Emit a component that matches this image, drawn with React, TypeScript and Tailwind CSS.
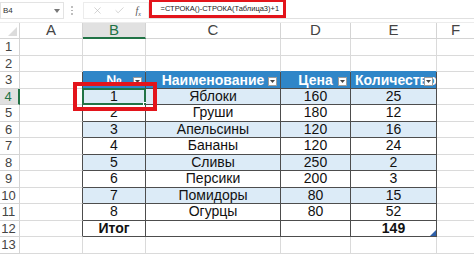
import { Check, X } from "lucide-react";

type Row = [string, string, string, string];

const rows: Row[] = [
    ["1", "Яблоки", "160", "25"],
    ["2", "Груши", "180", "12"],
    ["3", "Апельсины", "120", "16"],
    ["4", "Бананы", "120", "24"],
    ["5", "Сливы", "250", "2"],
    ["6", "Персики", "200", "3"],
    ["7", "Помидоры", "80", "15"],
    ["8", "Огурцы", "80", "52"],
];

const widths = ["w-[63px]", "w-[135px]", "w-[70px]", "w-[86px]"];

const FilterButton = () => (
    <span className="absolute right-[3px] top-[5px] flex h-[9px] w-[9px] items-center justify-center border border-[#9c9c9c] bg-white">
        <svg width="5" height="3" viewBox="0 0 5 3">
            <path d="M0 0h5L2.5 3z" fill="#444" />
        </svg>
    </span>
);

const RowHeader = ({ n, active }: { n: number; active?: boolean }) => (
    <div
        className={`flex w-[20px] shrink-0 items-center justify-center border-b pr-[2px] text-[13px] ${
            active
                ? "border-r-2 border-r-[#217346] border-b-[#d4d4d4] bg-[#e1e1e1] text-[#217346]"
                : "border-r border-r-[#d4d4d4] border-b-[#d4d4d4] text-[#444]"
        }`}
    >
        {n}
    </div>
);

const EmptyRow = ({ n, tableTop }: { n: number; tableTop?: boolean }) => (
    <div className="flex h-[16.5px]">
        <RowHeader n={n} />
        <div className="w-[63px] shrink-0 border-r border-b border-[#dadada]" />
        {widths.map((w, i) => (
            <div
                key={i}
                className={`${w} shrink-0 border-r border-b border-r-[#dadada] ${tableTop ? "border-b-[#2f86c8]" : "border-b-[#dadada]"}`}
            />
        ))}
        <div className="flex-1 border-b border-[#dadada]" />
    </div>
);

const HeaderRow = () => (
    <div className="flex h-[16.5px]">
        <RowHeader n={3} />
        <div className="w-[63px] shrink-0 border-r border-b border-r-[#4d4d4d] border-b-[#dadada]" />
        {["№", "Наименование", "Цена", "Количество"].map((t, i) => (
            <div
                key={t}
                className={`${widths[i]} relative flex shrink-0 items-center justify-center overflow-hidden border-r border-b border-[#4d4d4d] bg-[#2f86c8] text-[14px] leading-none font-bold whitespace-nowrap text-white`}
            >
                {i === 3 ? <span className="w-full overflow-hidden pl-[4px]">{t}</span> : <span>{t}</span>}
                <FilterButton />
            </div>
        ))}
        <div className="flex-1 border-b border-[#dadada]" />
    </div>
);

const DataRow = ({ n, cells, band, selected, total }: { n: number; cells: Row; band?: boolean; selected?: boolean; total?: boolean }) => (
    <div className="flex h-[16.5px]">
        <RowHeader n={n} active={selected} />
        <div className="w-[63px] shrink-0 border-r border-b border-r-[#4d4d4d] border-b-[#dadada]" />
        {cells.map((c, i) => (
            <div
                key={i}
                className={`${widths[i]} relative flex shrink-0 items-center justify-center border-r border-b border-[#4d4d4d] text-[14px] text-[#111] ${
                    band ? "bg-[#dcebf7]" : "bg-white"
                } ${total ? "font-bold" : ""}`}
            >
                {c}
                {selected && i === 0 && (
                    <>
                        <span className="absolute -inset-px border-2 border-[#217346]" />
                        <span className="absolute -right-[3px] -bottom-[3px] h-[5px] w-[5px] border border-white bg-[#217346]" />
                        <span className="absolute -right-[13px] -bottom-[10px] h-[8px] w-[8px] border border-[#c6c6c6] bg-[#fbe9d4]" />
                    </>
                )}
                {total && i === 3 && (
                    <svg className="absolute right-0 bottom-0" width="6" height="6" viewBox="0 0 6 6">
                        <path d="M6 0v6H0z" fill="#2e5fa8" />
                    </svg>
                )}
            </div>
        ))}
        <div className="flex-1 border-b border-[#dadada]" />
    </div>
);

const Toolbar = () => (
    <div className="flex h-[22px] items-start bg-white">
        <div className="mt-[2px] flex h-[17px] w-[64px] items-center justify-between border border-[#e3e3e3] pr-[3px] pl-[2px]">
            <span className="text-[8px] text-[#333]">B4</span>
            <svg width="6" height="4" viewBox="0 0 6 4">
                <path d="M0 0h6L3 4z" fill="#777" />
            </svg>
        </div>
        <div className="mt-[6px] ml-[7px] flex flex-col gap-[2px]">
            <span className="h-[1.5px] w-[1.5px] rounded-full bg-[#aaa]" />
            <span className="h-[1.5px] w-[1.5px] rounded-full bg-[#aaa]" />
            <span className="h-[1.5px] w-[1.5px] rounded-full bg-[#aaa]" />
        </div>
        <div className="mt-[2px] ml-[10px] flex h-[17px] w-[66px] items-center border border-[#ececec] pl-[8px]">
            <X size={11} strokeWidth={1.3} color="#b7b7b7" />
            <Check className="ml-[11px]" size={11} strokeWidth={1.3} color="#b7b7b7" />
            <span className="ml-[11px] font-['Liberation_Serif',serif] text-[10px] text-[#555] italic">
                f<sub className="text-[6px]">x</sub>
            </span>
        </div>
        <div className="flex h-[19px] flex-1 items-start border-b border-[#e0e0e0]">
            <div className="-mt-[1px] flex h-[19px] w-[137px] items-center border-[3.5px] border-[#e3141b] bg-white pl-[9px]">
                <span className="text-[7.5px] whitespace-nowrap text-[#222]">=СТРОКА()-СТРОКА(Таблица3)+1</span>
            </div>
        </div>
    </div>
);

const ColumnHeaders = () => (
    <div className="flex h-[17px] border-t border-[#ececec] text-[15px] text-[#444]">
        <div className="relative w-[20px] shrink-0 border-r border-b border-[#d4d4d4]">
            <svg className="absolute right-[2px] bottom-[2px]" width="9" height="9" viewBox="0 0 9 9">
                <path d="M9 0v9H0z" fill="#dcdcdc" />
            </svg>
        </div>
        <div className="flex w-[63px] shrink-0 items-center justify-center border-r border-b border-[#d4d4d4]">A</div>
        <div className="flex w-[63px] shrink-0 items-center justify-center border-r border-b-2 border-r-[#d4d4d4] border-b-[#217346] bg-[#e1e1e1] text-[#217346]">B</div>
        <div className="flex w-[135px] shrink-0 items-center justify-center border-r border-b border-[#d4d4d4]">C</div>
        <div className="flex w-[70px] shrink-0 items-center justify-center border-r border-b border-[#d4d4d4]">D</div>
        <div className="flex w-[86px] shrink-0 items-center justify-center border-r border-b border-[#d4d4d4]">E</div>
        <div className="flex flex-1 items-center justify-center border-b border-[#d4d4d4]">F</div>
    </div>
);

export default function App() {
    return (
        <div className="relative h-[254px] w-[474px] overflow-hidden bg-white font-['Liberation_Sans',Arial,sans-serif]">
            <Toolbar />
            <ColumnHeaders />
            <EmptyRow n={1} />
            <EmptyRow n={2} tableTop />
            <HeaderRow />
            {rows.map((r, i) => (
                <DataRow key={r[0]} n={i + 4} cells={r} band={i % 2 === 0} selected={i === 0} />
            ))}
            <DataRow n={12} cells={["Итог", "", "", "149"]} total />
            <EmptyRow n={13} />
            {/* annotation frame around the selected cell */}
            <div className="absolute top-[82px] left-[73px] h-[29px] w-[84px] border-4 border-[#e3141b]" />
        </div>
    );
}
